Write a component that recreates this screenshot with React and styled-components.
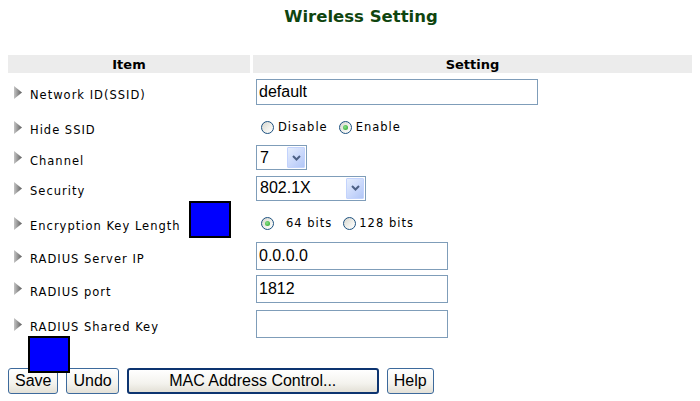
import styled, { createGlobalStyle } from 'styled-components';

const Global = createGlobalStyle`
  body {
    margin: 8px;
    background: #fff;
    font-family: "DejaVu Sans", Verdana, sans-serif;
    color: #000;
  }
`;

const Title = styled.h1`
  margin: 0 0 29px;
  padding-left: 22px;
  text-align: center;
  font-size: 16.5px;
  line-height: 18px;
  font-weight: bold;
  color: #0f450f;
`;

const Row = styled.div`
  display: grid;
  grid-template-columns: 242px 1fr;
  grid-template-rows: ${p => p.$h}px;
  column-gap: 3px;
`;

const HeadCell = styled.div`
  background: #ececec;
  display: flex;
  align-items: center;
  justify-content: center;
  font-size: 13px;
  font-weight: bold;
`;

const LabelCell = styled.div`
  display: flex;
  align-items: center;
  padding-left: 6px;
  min-height: 0;
`;

const LabelText = styled.span`
  padding-top: 6px;
  margin-left: 8px;
  font-size: 11.5px;
  letter-spacing: 1px;
  white-space: nowrap;
`;

const ControlCell = styled.div`
  display: flex;
  align-items: center;
  padding-left: 3px;
  min-height: 0;
`;

const TextInput = styled.input`
  box-sizing: border-box;
  width: ${p => p.$w}px;
  height: ${p => p.$h}px;
  border: 1px solid #7f9db9;
  padding: 0 2px;
  margin: 0;
  font-family: "Liberation Sans", Arial, sans-serif;
  font-size: 16px;
  color: #000;
  background: #fff;
  outline: none;
`;

const Select = styled.div`
  box-sizing: border-box;
  width: ${p => p.$w}px;
  height: ${p => p.$h}px;
  border: 1px solid #7f9db9;
  display: flex;
  align-items: center;
  justify-content: space-between;
  padding: 1px 1px 1px 3px;
  font-family: "Liberation Sans", Arial, sans-serif;
  font-size: 16px;
`;

const DropButton = styled.span`
  box-sizing: border-box;
  width: 18px;
  height: 100%;
  border: 1px solid #c3d3fd;
  border-radius: 1px;
  background: linear-gradient(135deg, #e6eefc 0%, #c7d6fb 60%, #b2c7f6 100%);
  display: flex;
  align-items: center;
  justify-content: center;
`;

const RadioGroup = styled.div`
  display: flex;
  align-items: center;
  padding-left: 5px;
`;

const Radio = styled.span`
  box-sizing: border-box;
  width: 13px;
  height: 13px;
  border-radius: 50%;
  border: 1px solid #1c5180;
  background: linear-gradient(135deg, #d6d6ce 0%, #f2f2ee 60%, #fff 100%);
  display: flex;
  align-items: center;
  justify-content: center;
  flex: none;

  &::after {
    content: '';
    width: 5px;
    height: 5px;
    border-radius: 50%;
    background: radial-gradient(circle at 40% 40%, #8be08b, #21a121);
    display: ${p => (p.$on ? 'block' : 'none')};
  }
`;

const RadioText = styled.span`
  font-size: 11.5px;
  letter-spacing: 1px;
  margin-left: ${p => p.$gap}px;
  margin-right: 11px;
  white-space: nowrap;
`;

const BlueBox = styled.span`
  box-sizing: border-box;
  width: 42px;
  height: 37px;
  background: #0000ff;
  border: 2px solid #000;
  flex: none;
`;

const InlineBox = styled(BlueBox)`
  margin-left: 8px;
  margin-bottom: 7px;
`;

const Footer = styled.div`
  position: relative;
  margin-top: 26px;
  display: flex;
  gap: 8px;
`;

const FloatBox = styled(BlueBox)`
  position: absolute;
  left: 20px;
  top: -32px;
  z-index: 1;
`;

const Button = styled.button`
  box-sizing: border-box;
  height: 26px;
  width: ${p => (p.$w ? `${p.$w}px` : 'auto')};
  padding: 0 6px;
  margin: 0;
  border: ${p => (p.$primary ? '2px solid #0d3470' : '1px solid #3d6a9c')};
  border-radius: 3px;
  background: linear-gradient(#ffffff 0%, #f4f3ee 60%, #e3e0d6 100%);
  font-family: "Liberation Sans", Arial, sans-serif;
  font-size: 16px;
  color: #000;
`;

const Arrow = () => (
  <svg width="8" height="13" viewBox="0 0 8 13">
    <defs>
      <linearGradient id="ag" x1="0" x2="1" y1="0" y2="0">
        <stop offset="0" stopColor="#c4c4c4" />
        <stop offset="1" stopColor="#5c5c5c" />
      </linearGradient>
    </defs>
    <polygon points="0,0 8,6.5 0,13" fill="url(#ag)" />
  </svg>
);

const Chevron = () => (
  <svg width="9" height="6" viewBox="0 0 9 6">
    <polyline points="1,1 4.5,4.5 8,1" fill="none" stroke="#4d6185" strokeWidth="2" />
  </svg>
);

const Label = ({ children, box }) => (
  <LabelCell>
    <Arrow />
    <LabelText>{children}</LabelText>
    {box && <InlineBox />}
  </LabelCell>
);

export default function App() {
  return (
    <>
      <Global />
      <Title>Wireless Setting</Title>

      <Row $h={18}>
        <HeadCell>Item</HeadCell>
        <HeadCell>Setting</HeadCell>
      </Row>

      <div style={{ marginTop: 1 }}>
        <Row $h={36}>
          <Label>Network ID(SSID)</Label>
          <ControlCell>
            <TextInput $w={282} $h={26} defaultValue="default" />
          </ControlCell>
        </Row>

        <Row $h={34}>
          <Label>Hide SSID</Label>
          <ControlCell>
            <RadioGroup>
              <Radio />
              <RadioText $gap={4}>Disable</RadioText>
              <Radio $on />
              <RadioText $gap={4}>Enable</RadioText>
            </RadioGroup>
          </ControlCell>
        </Row>

        <Row $h={27}>
          <Label>Channel</Label>
          <ControlCell>
            <Select $w={51} $h={25}>
              <span>7</span>
              <DropButton><Chevron /></DropButton>
            </Select>
          </ControlCell>
        </Row>

        <Row $h={34}>
          <Label>Security</Label>
          <ControlCell>
            <Select $w={110} $h={25}>
              <span>802.1X</span>
              <DropButton><Chevron /></DropButton>
            </Select>
          </ControlCell>
        </Row>

        <Row $h={36}>
          <Label box>Encryption Key Length</Label>
          <ControlCell>
            <RadioGroup>
              <Radio $on />
              <RadioText $gap={12}>64 bits</RadioText>
              <Radio />
              <RadioText $gap={3}>128 bits</RadioText>
            </RadioGroup>
          </ControlCell>
        </Row>

        <Row $h={30}>
          <Label>RADIUS Server IP</Label>
          <ControlCell>
            <TextInput $w={192} $h={28} defaultValue="0.0.0.0" />
          </ControlCell>
        </Row>

        <Row $h={35}>
          <Label>RADIUS port</Label>
          <ControlCell>
            <TextInput $w={192} $h={28} defaultValue="1812" />
          </ControlCell>
        </Row>

        <Row $h={36}>
          <Label>RADIUS Shared Key</Label>
          <ControlCell>
            <TextInput $w={192} $h={28} defaultValue="" />
          </ControlCell>
        </Row>
      </div>

      <Footer>
        <FloatBox />
        <Button>Save</Button>
        <Button>Undo</Button>
        <Button $w={252} $primary>MAC Address Control...</Button>
        <Button>Help</Button>
      </Footer>
    </>
  );
}
